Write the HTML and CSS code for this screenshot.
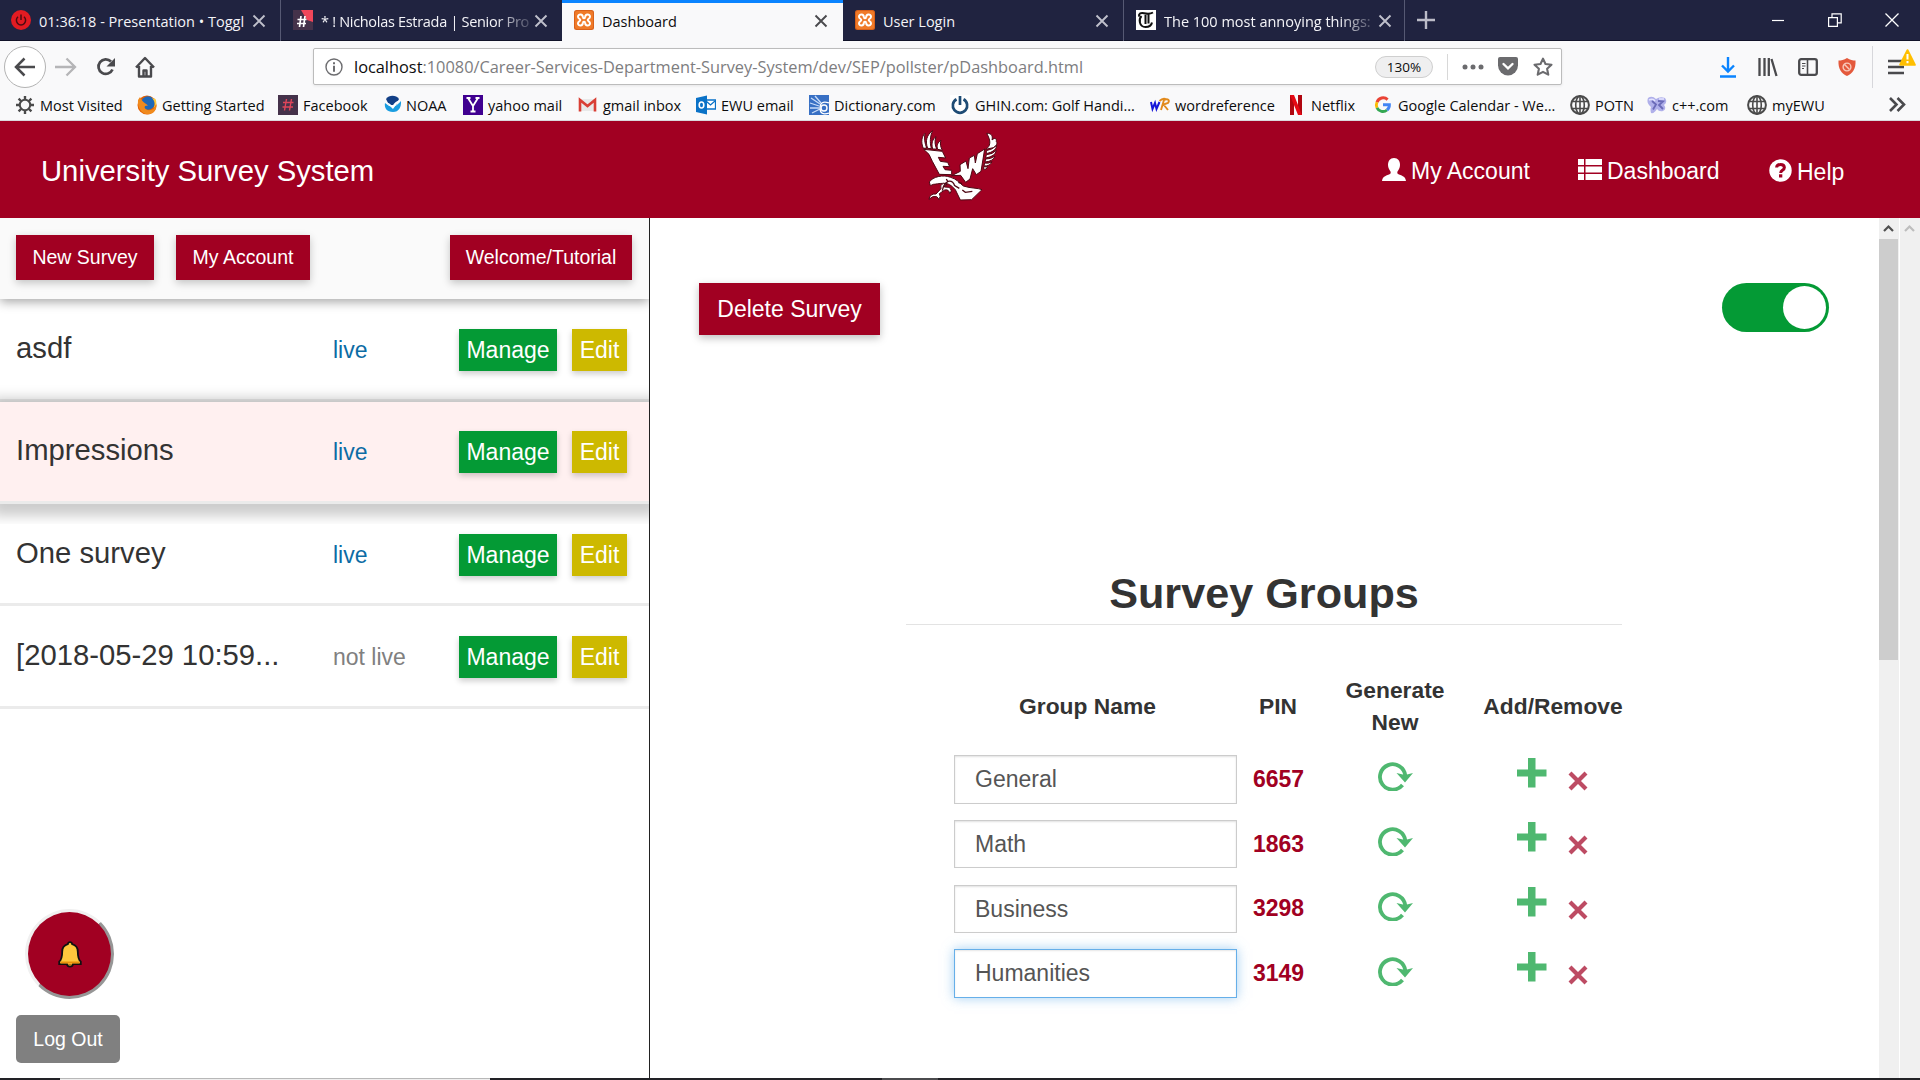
FILE: index.html
```html
<!DOCTYPE html>
<html lang="en">
<head>
<meta charset="utf-8">
<title>Dashboard</title>
<link rel="stylesheet" href="styles.css">
</head>
<body>
<svg class="defs" width="0" height="0">
  <symbol id="x" viewBox="0 0 14 14"><path d="M1.5 1.500 12.500 12.500M12.500 1.500 1.500 12.500" fill="none" stroke="currentColor" stroke-width="1.900"/></symbol>
  <symbol id="xampp" viewBox="0 0 20 20"><rect width="20" height="20" rx="2.500" fill="#d9611a"/><rect x="1" y="1" width="18" height="18" rx="2" fill="#f07a28"/><path d="M8.800 7.500C9.200 3.500 4 3.500 4 6.700 4 8.700 6.300 8.800 6.300 10S4 11.300 4 13.300C4 16.500 9.200 16.500 8.800 12.500M11.200 7.500C10.800 3.500 16 3.500 16 6.700 16 8.700 13.700 8.800 13.700 10S16 11.300 16 13.300C16 16.500 10.800 16.500 11.200 12.500M8.800 7.300Q10 9 11.200 7.300M8.800 12.700Q10 11 11.200 12.700" fill="none" stroke="#fff" stroke-width="2"/></symbol>
  <symbol id="globe" viewBox="0 0 20 20"><g fill="none" stroke="#4a4a4a" stroke-width="1.600"><circle cx="10" cy="10" r="8.900" stroke-width="2"/><ellipse cx="10" cy="10" rx="4.300" ry="8.900"/><path d="M10 1v18M2 6.500h16M2 13.500h16"/></g></symbol>
  <symbol id="refresh" viewBox="0 0 36 30"><path d="M25.500 24A12.700 12.700 0 1 1 28.300 14.500" fill="none" stroke="#4fb870" stroke-width="3.800"/><path d="M19.500 12 L28 14 36 12 28 21.500Z" fill="#4fb870"/></symbol>
  <symbol id="plus" viewBox="0 0 30 30"><path d="M0 11.500H11V0H18.500V11.500H29.500V18.500H18.500V29.500H11V18.500H0Z" fill="#4fb870"/></symbol>
  <symbol id="remove" viewBox="0 0 20 20"><path d="M2 2 18 18M18 2 2 18" stroke="#bd4b63" stroke-width="4.200" fill="none"/></symbol>
</svg>

<div class="tabs">
  <div class="tab">
    <svg class="fav" viewBox="0 0 20 20"><circle cx="10" cy="10" r="10" fill="#e21b22"/><path d="M7 6.800a4.600 4.600 0 1 0 6 0M10 4.500v5.500" stroke="#4d0b12" stroke-width="1.500" fill="none"/></svg>
    <span class="tab-title">01:36:18 - Presentation • Toggl</span><svg class="tab-x"><use href="#x"/></svg>
  </div>
  <div class="tab">
    <svg class="fav" viewBox="0 0 20 20"><rect width="20" height="20" fill="#45324a"/><path d="M8 0h12v12l-6-2z" fill="#f0475a"/><path d="M8 6 6.500 17M12 6 10.500 17M4.500 9.500h9M4 13.500h9" stroke="#fff" stroke-width="1.700"/></svg>
    <span class="tab-title fade tight">* ! Nicholas Estrada | Senior Pro</span><svg class="tab-x"><use href="#x"/></svg>
  </div>
  <div class="tab active">
    <svg class="fav"><use href="#xampp"/></svg>
    <span class="tab-title">Dashboard</span><svg class="tab-x"><use href="#x"/></svg>
  </div>
  <div class="tab">
    <svg class="fav"><use href="#xampp"/></svg>
    <span class="tab-title">User Login</span><svg class="tab-x"><use href="#x"/></svg>
  </div>
  <div class="tab last">
    <svg class="fav" viewBox="0 0 20 20"><rect width="20" height="20" fill="#fff"/><path d="M3 6.500C2.500 3.500 5 2.500 8 3.200S14 4.200 17 2.500M5.500 6C2.500 9 3 17 9.500 17 13 17 15.500 15 16 12.500M9.500 5v9M12.500 4.500v9" stroke="#111" stroke-width="2" fill="none"/></svg>
    <span class="tab-title fade">The 100 most annoying things:</span><svg class="tab-x"><use href="#x"/></svg>
  </div>
  <svg class="new-tab" viewBox="0 0 20 20"><path d="M1 10h18M10 1v18" stroke="#bcbcc8" stroke-width="2.400"/></svg>
  <div class="win">
    <svg width="14" height="14"><path d="M1 7.500h12" stroke="#fff" stroke-width="1.200"/></svg>
    <svg width="14" height="14" fill="none" stroke="#fff" stroke-width="1.200"><path d="M.6 4.600h8.800v8.800H.6zM4 4.500V.8h9.200v9H9.500"/></svg>
    <svg width="14" height="14" stroke="#fff" stroke-width="1.300"><path d="M.5.5l13 13M13.500.5l-13 13"/></svg>
  </div>
</div>

<div class="toolbar">
  <div class="nav-icons">
    <span class="back"><svg width="22" height="20" viewBox="0 0 22 20"><path d="M21 10H2M10.500 1.500 2 10l8.500 8.500" fill="none" stroke="#4a4a4d" stroke-width="2.500"/></svg></span>
    <svg class="fwd" width="22" height="20" viewBox="0 0 22 20"><path d="M0 10h19M11.500 1.500 20 10l-8.500 8.500" fill="none" stroke="#b5b5b7" stroke-width="2.300"/></svg>
    <svg class="reload" width="20" height="20" viewBox="0 0 20 20"><path d="M16.500 12.500A7.300 7.300 0 1 1 15 4.500" fill="none" stroke="#4a4a4d" stroke-width="2.700"/><path d="M19 1v8.500h-8.500z" fill="#4a4a4d"/></svg>
    <svg class="home" width="20" height="22" viewBox="0 0 20 22"><path d="M1 11.500 10 2l9 9.500M4 10v10.500h12V10M8.500 20.500v-6h3v6" fill="none" stroke="#4a4a4d" stroke-width="2.400" stroke-linejoin="round"/></svg>
  </div>
  <div class="url">
    <svg class="info" width="18" height="18" viewBox="0 0 18 18"><circle cx="9" cy="9" r="8" fill="none" stroke="#6d6d70" stroke-width="1.400"/><path d="M9 4.200v2.100M9 7.700v6" stroke="#6d6d70" stroke-width="2"/></svg>
    <span class="addr"><b>localhost</b>:10080/Career-Services-Department-Survey-System/dev/SEP/pollster/pDashboard.html</span>
    <span class="zoom">130%</span>
    <span class="vr"></span>
    <svg class="dots" width="22" height="6" viewBox="0 0 22 6" fill="#6b6b6e"><circle cx="3" cy="3" r="2.500"/><circle cx="11" cy="3" r="2.500"/><circle cx="19" cy="3" r="2.500"/></svg>
    <svg class="pocket" width="20" height="19" viewBox="0 0 20 19"><path d="M2 0h16q2 0 2 2v6.500a10 10 0 0 1-20 0V2Q0 0 2 0z" fill="#6b6b6e"/><path d="M5.500 7 10 11.300 14.500 7" stroke="#fff" stroke-width="2.400" fill="none" stroke-linecap="round"/></svg>
    <svg class="star" width="20" height="20" viewBox="0 0 20 20"><path d="M10 1.600 12.500 7l6 .7-4.400 4 1.200 6L10 14.800 4.700 17.700l1.200-6L1.500 7.700l6-.7z" fill="none" stroke="#6b6b6e" stroke-width="2.100" stroke-linejoin="round"/></svg>
  </div>
  <div class="right-icons">
    <svg width="16" height="22" viewBox="0 0 16 22"><path d="M8 1v14M2 9.500l6 6 6-6M0 20.500h16" fill="none" stroke="#0a84ff" stroke-width="2.400"/></svg>
    <svg width="20" height="20" viewBox="0 0 20 20"><path d="M1.500 1v18M6.500 1v18M10.800 1v18M13.500 2l5 17" stroke="#4a4a4d" stroke-width="2.300"/></svg>
    <svg width="20" height="18" viewBox="0 0 20 18"><rect x="1.200" y="1.200" width="17.600" height="15.600" rx="2" fill="none" stroke="#4a4a4d" stroke-width="2.300"/><path d="M9.500 1v16" stroke="#4a4a4d" stroke-width="1.600"/><path d="M4 5.500h3.500M4 8h3.500M4 10.500h2" stroke="#4a4a4d" stroke-width="1.200"/></svg>
    <svg width="18" height="18" viewBox="0 0 18 18"><path d="M9 0C12 2 15 2.500 17.500 2.500 18 11 14.500 15.500 9 18 3.500 15.500 0 11 .5 2.500 3 2.500 6 2 9 0z" fill="#e4593c"/><g fill="none" stroke="#f8c9bb" stroke-width="1.400"><circle cx="9" cy="9" r="3.900"/><path d="M6.500 6.500l5 5"/></g></svg>
    <span class="menu-sep"></span>
    <span class="menu"><svg width="17" height="16" viewBox="0 0 17 16"><path d="M0 2h16M0 8h16M0 14h16" stroke="#4a4a4d" stroke-width="2.300"/></svg>
    <svg class="warn" width="17" height="17" viewBox="0 0 17 17"><path d="M8.500 1.200 15.800 15.800H1.200z" fill="#ffbf00" stroke="#ffbf00" stroke-width="2" stroke-linejoin="round"/><path d="M8.500 5v5.500M8.500 12v2.200" stroke="#fff" stroke-width="2"/></svg></span>
  </div>
</div>

<div class="bookmarks">
  <span><svg viewBox="0 0 20 20"><circle cx="10" cy="10" r="5.200" fill="none" stroke="#4a4a4a" stroke-width="2"/><path d="M10 1v3.500M10 15.500V19M1 10h3.500M15.500 10H19M3.600 3.600 6 6M14 14l2.400 2.400M16.400 3.600 14 6M6 14l-2.400 2.400" stroke="#4a4a4a" stroke-width="2.400"/></svg>Most Visited</span>
  <span><svg viewBox="0 0 20 20"><circle cx="10" cy="10" r="9.500" fill="#e66000"/><circle cx="11" cy="8" r="6.800" fill="#1f68b8"/><path d="M1 5C0 14 6 20 12 19.300c5-.6 8-5 7.500-10C18 14 14 16 10.500 15 8 14.300 7 12.500 8 11l3-.5C9 8.500 7 8 5.500 6 4.500 4.500 3.500 3 3 2z" fill="#f08a1d"/><path d="M15 3c3 3 3.500 7 1.500 10 3-2 3.500-6 2-9z" fill="#ffcb3b"/></svg>Getting Started</span>
  <span><svg viewBox="0 0 20 20"><rect width="20" height="20" fill="#45324a"/><path d="M8.500 4 6.500 15.500M13.500 4 11.500 15.500M5 7.500h10.500M4.500 12h10.500" stroke="#e0455a" stroke-width="1.400"/></svg>Facebook</span>
  <span><svg class="noaa" viewBox="0 0 20 20"><path d="M3 4a8 8 0 0 1 13 0l-3 6H6z" fill="#123f86"/><path d="M2 8q8 8 16-2c.5 6-2 11-8 11S1 13 2 8z" fill="#1a9de0"/><path d="M2 6.500Q7 8 9.500 11 12 6 17.500 5 13 9 10 14 6 10 2 6.500z" fill="#fff"/></svg>NOAA</span>
  <span><svg viewBox="0 0 20 20"><rect width="20" height="20" fill="#400090"/><path d="M5 3l5 8 5-8M10 10.500V16M3.500 3h4M12.500 3h4M7.500 16.500h5" stroke="#fff" stroke-width="1.800" fill="none"/></svg>yahoo mail</span>
  <span><svg viewBox="0 0 20 20"><path d="M1.500 4h16v12h-16z" fill="#e9e9e9"/><path d="M2 16.500V5l7.500 6L17 5v11.500" fill="none" stroke="#d93f35" stroke-width="2.600"/></svg>gmail inbox</span>
  <span><svg viewBox="0 0 20 20"><path d="M9 5h10.500v9H9z" fill="#fff" stroke="#0a72c7" stroke-width="1.300"/><path d="M10 6l4.500 4L19 6" fill="none" stroke="#0a72c7" stroke-width="1.300"/><path d="M0 3 11 .5v19L0 17z" fill="#0a72c7"/><ellipse cx="5.500" cy="10" rx="2.300" ry="3" fill="none" stroke="#fff" stroke-width="1.600"/></svg>EWU email</span>
  <span><svg viewBox="0 0 20 20"><rect width="20" height="20" fill="#3870c4"/><path d="M2 3l9 6M6 1l6 7M1 8l9 3M1 13h9M3 18l8-4" stroke="#c8dcf8" stroke-width="1.300"/><circle cx="15" cy="13" r="3" fill="none" stroke="#fff" stroke-width="1.400"/><path d="M20 8q-9-3-9 5t9 5" fill="none" stroke="#fff" stroke-width="1.300"/></svg>Dictionary.com</span>
  <span><svg viewBox="0 0 20 20"><rect width="20" height="20" fill="#fff"/><path d="M6.500 4.300a7.200 7.200 0 1 0 7 0M10 1v9" fill="none" stroke="#1f4c75" stroke-width="2.700"/></svg>GHIN.com: Golf Handi...</span>
  <span><svg viewBox="0 0 20 20"><path d="M1 7l1.500 7L5 8l1.500 6L9.500 7" fill="none" stroke="#1616d8" stroke-width="2"/><path d="M11 15l3-10c4-2 6 .5 4 3l-4.500 1.500L18 15M9.500 6q3-3 6-2" fill="none" stroke="#e28a1c" stroke-width="1.900"/></svg>wordreference</span>
  <span><svg viewBox="0 0 20 20"><path d="M4 0h4v20H4zM12 0h4v20h-4z" fill="#b0060f"/><path d="M4 0h4l8 20h-4z" fill="#e50914"/></svg>Netflix</span>
  <span><svg viewBox="0 0 20 20"><g fill="none" stroke-width="2.900"><path d="M14.600 4.600A6.500 6.500 0 0 0 4 7.200" stroke="#ea4335"/><path d="M4 7.200a6.500 6.500 0 0 0 0 5.600" stroke="#fbbc05"/><path d="M4 12.800a6.500 6.500 0 0 0 10 2.200" stroke="#34a853"/><path d="M14 15a6.500 6.500 0 0 0 2.400-5.300H10" stroke="#4285f4"/></g></svg>Google Calendar - We...</span>
  <span><svg><use href="#globe"/></svg>POTN</span>
  <span><svg viewBox="0 0 20 20"><path d="M1 3q4-3 8 1 4-3 9-1 3 4-1 7 3 4-1 6-4 1-6-2-3 5-6 4-1-4 0-6-5-4-3-9z" fill="#b0b0ea"/><path d="M5 6l4 3.500-3 5M11 6l5 .5-4 3.500 4 4" fill="none" stroke="#6a6ab8" stroke-width="1.800"/><path d="M2 5q4-2 6 1M12 4l5 0" stroke="#e4e4ff" stroke-width="1.500" fill="none"/></svg>c++.com</span>
  <span><svg><use href="#globe"/></svg>myEWU</span>
  <span><svg viewBox="0 0 20 20"><path d="M2 3l6.500 6.500L2 16M9.500 3l6.500 6.500L9.500 16" fill="none" stroke="#4a4a4d" stroke-width="2.600"/></svg></span>
</div>

<header class="header">
  <h1>University Survey System</h1>
  <svg class="eagle" width="160" height="97" viewBox="0 0 480 291">
    <g fill="#fff" stroke="#4d0814" stroke-width="3" stroke-linejoin="round">
      <path d="M130 82C122 64 125 46 135 37 132 52 134 66 140 81Z"/><path d="M143 82C135 60 140 42 158 29 150 46 149 63 154 83Z"/><path d="M158 84C153 66 158 54 168 47 163 61 165 72 170 84Z"/><path d="M173 85C169 74 173 64 183 58 179 69 182 78 187 88Z"/>
      <path d="M131 85 187 91 197 111 175 109 181 121 203 124 209 137 189 136 195 146 215 148 215 161 178 160 157 121 147 100Z"/>
      <path d="M317 85C332 76 334 60 320 37 338 36 338 50 336 57 346 48 350 53 349 62 354 66 348 76 340 80Z"/><path d="M319 89Q338 86 350 73 350 91 319 98Z"/><path d="M319 101Q338 100 349 88 347 106 317 111Z"/><path d="M317 114Q332 115 345 105 340 121 315 123Z"/><path d="M314 126Q325 129 336 122 330 136 312 135Z"/><path d="M311 137 323 138Q319 147 311 145Z"/>
      <path d="M240 131 258 120 264 143 268 111 283 103 286 126 292 98 314 84 303 151 289 161 278 143 270 174 257 184 242 163 215 164 241 151Z"/>
      <path d="M148 183C158 167 190 160 212 169 228 173 238 185 250 195 274 203 292 200 306 206L275 236 241 237 226 206C214 193 205 186 190 187 177 187 166 190 160 190L151 194Z"/>
      <path d="M190 187Q178 192 183 203L168 219Q150 217 147 235 158 223 170 227 176 231 176 236 184 226 178 218L194 207Q207 204 209 218 219 208 207 199L193 198Q191 193 201 191Z"/>
    </g>
    <path d="M187 209Q190 190 204 181 218 177 224 194L238 202M247 207 256 214 277 211M203 181 199 174M235 184 246 188" stroke="#4d0814" stroke-width="4" fill="none"/>
  </svg>
  <nav>
    <a class="n1"><svg width="24" height="23" viewBox="0 0 24 23"><path d="M12 0c4 0 6 3 6 7 0 3-1.500 5-2.500 6.500-.6 1.500 0 2.500 1.500 3 4 1.500 6.500 2.500 7 6.500H0c.5-4 3-5 7-6.500 1.500-.5 2.100-1.500 1.500-3C7.500 12 6 10 6 7c0-4 2-7 6-7z" fill="#fff"/></svg>My Account</a>
    <a class="n2"><svg width="24" height="21" viewBox="0 0 24 21"><path d="M0 0h6v6H0zM7.500 0H24v6H7.500zM0 7.500h6v6H0zM7.500 7.500H24v6H7.500zM0 15h6v6H0zM7.500 15H24v6H7.500z" fill="#fff"/></svg>Dashboard</a>
    <a class="n3"><svg width="23" height="23" viewBox="0 0 23 23"><circle cx="11.500" cy="11.500" r="11.200" fill="#fff"/><path d="M7.600 8.500Q7.800 5.600 11.500 5.600T15.400 8.600Q15.400 10.300 13.300 11.400 11.700 12.300 11.700 14" fill="none" stroke="#a10022" stroke-width="3"/><path d="M10 15.300h3.300v3.200H10z" fill="#a10022"/></svg>Help</a>
  </nav>
</header>

<div class="page">
  <aside>
    <div class="actions"><button>New Survey</button><button>My Account</button><button class="end">Welcome/Tutorial</button></div>
    <div class="survey"><span class="name">asdf</span><span class="status">live</span><button class="manage">Manage</button><button class="edit">Edit</button></div>
    <div class="survey selected"><span class="name">Impressions</span><span class="status">live</span><button class="manage">Manage</button><button class="edit">Edit</button></div>
    <div class="survey"><span class="name">One survey</span><span class="status">live</span><button class="manage">Manage</button><button class="edit">Edit</button></div>
    <div class="survey"><span class="name">[2018-05-29 10:59...</span><span class="status off">not live</span><button class="manage">Manage</button><button class="edit">Edit</button></div>
    <div class="foot">
      <button class="bell"><svg width="24" height="27" viewBox="0 0 24 27"><path d="M12 1.200c1.200 0 2 .8 2.200 2 3.800 1 5.600 4 5.600 7.500 0 6 .8 8 3 10v2.500H15c-.3 1.800-1.500 2.500-3 2.500s-2.700-.7-3-2.500H1.200v-2.500c2.200-2 3-4 3-10 0-3.500 1.800-6.500 5.600-7.500.2-1.200 1-2 2.200-2z" fill="#ffc83d" stroke="#111" stroke-width="1.800"/><path d="M2.500 21.500h19" stroke="#e8920c" stroke-width="2"/><path d="M9.800 23.300h4.400q-2 2.700-4.400 0z" fill="#a05c10"/></svg></button>
      <button class="logout">Log Out</button>
    </div>
  </aside>
  <main>
    <div class="top"><button class="delete">Delete Survey</button><span class="toggle"></span></div>
    <h2>Survey Groups</h2>
    <div class="grid heads"><b class="first">Group Name</b><b>PIN</b><b>Generate<br>New</b><b>Add/Remove</b></div>
    <div class="grid"><span class="field">General</span><b class="pin">6657</b><svg class="refresh"><use href="#refresh"/></svg><span class="ops"><svg class="plus"><use href="#plus"/></svg><svg class="remove"><use href="#remove"/></svg></span></div>
    <div class="grid"><span class="field">Math</span><b class="pin">1863</b><svg class="refresh"><use href="#refresh"/></svg><span class="ops"><svg class="plus"><use href="#plus"/></svg><svg class="remove"><use href="#remove"/></svg></span></div>
    <div class="grid"><span class="field">Business</span><b class="pin">3298</b><svg class="refresh"><use href="#refresh"/></svg><span class="ops"><svg class="plus"><use href="#plus"/></svg><svg class="remove"><use href="#remove"/></svg></span></div>
    <div class="grid"><span class="field focus">Humanities</span><b class="pin">3149</b><svg class="refresh"><use href="#refresh"/></svg><span class="ops"><svg class="plus"><use href="#plus"/></svg><svg class="remove"><use href="#remove"/></svg></span></div>
  </main>
  <div class="scroll"><svg width="20" height="21"><path d="M5 13l4.500-4.500L14 13" fill="none" stroke="#505050" stroke-width="2.200"/></svg><div class="thumb"></div></div>
  <div class="scroll outer"><svg width="20" height="21"><path d="M5 13l4.500-4.500L14 13" fill="none" stroke="#bdbdbd" stroke-width="2.200"/></svg></div>
</div>
<div class="strip"><i class="light"></i><i class="mid"></i></div>
</body>
</html>
```
FILE: styles.css
```css
* { box-sizing: border-box; }
body {
  margin: 0;
  width: 1920px;
  height: 1080px;
  overflow: hidden;
  display: flex;
  flex-direction: column;
  background: #fff;
  font: 23px "Liberation Sans", Arial, sans-serif;
  color: #333;
}
svg { display: block; flex: none; }
.defs { position: absolute; }
button {
  border: 0;
  padding: 0;
  font: inherit;
  color: #fff;
  background: #a10022;
}

/* Browser chrome */
.tabs, .toolbar, .bookmarks {
  flex: none;
  display: flex;
  align-items: center;
  font-family: "Open Sans", "Noto Sans", sans-serif;
  font-size: 14.5px;
  color: #0c0c0d;
}
.tabs { height: 41px; background: #202340; border-bottom: 1px solid #101228; color: #f4f4f8; }
.tab {
  width: 281px;
  height: 41px;
  padding: 0 14px 0 11px;
  display: flex;
  align-items: center;
  border-right: 1px solid #565973;
}
.tab:nth-child(2) { border-right: 0; padding-left: 12px; }
.tab.active { background: #f9f9fa; border: 0; border-top: 3px solid #0a84ff; color: #0c0c0d; padding: 0 15px 3px 12px; }
.tab.active + .tab { padding-left: 12px; }
.tab.last { padding: 0 12px 0 12px; }
.fav { width: 20px; height: 20px; }
.tab-title { width: 212px; margin: 2px 0 0 8px; white-space: nowrap; }
.fade {
  width: 208px;
  margin-right: 4px;
  -webkit-mask-image: linear-gradient(90deg, #000 175px, transparent 216px);
  mask-image: linear-gradient(90deg, #000 175px, transparent 216px);
}
.tight { letter-spacing: -.3px; }
.tab-x { width: 14px; height: 14px; margin: 2px 0 0 auto; color: #bfc0cb; }
.active .tab-x { color: #4a4a4d; }
.new-tab { width: 20px; height: 20px; margin-left: 11px; }
.win { display: flex; gap: 43px; margin: 0 21px 0 auto; }

.toolbar { height: 51px; background: #f9f9fa; }
.nav-icons { width: 313px; display: flex; align-items: center; padding-left: 4px; }
.back {
  width: 42px;
  height: 42px;
  display: grid;
  place-items: center;
  border: 1px solid #b3b3b3;
  border-radius: 50%;
  background: #fff;
}
.fwd { margin-left: 9px; }
.reload { margin-left: 19px; }
.home { margin-left: 19px; }
.url {
  width: 1249px;
  height: 37px;
  display: flex;
  align-items: center;
  padding: 0 8px 0 11px;
  background: #fff;
  border: 1px solid #bcbcbc;
  border-radius: 2px;
  box-shadow: 0 1px 3px rgba(0, 0, 0, .08);
}
.addr { margin-left: 11px; color: #7d7d80; font-size: 16.35px; white-space: nowrap; }
.addr b { font-weight: 400; color: #0c0c0d; }
.zoom {
  width: 58px;
  height: 22px;
  margin-left: auto;
  border: 1px solid #cfcfcf;
  border-radius: 11px;
  background: #efeff0;
  font-size: 13.5px;
  line-height: 20px;
  text-align: center;
}
.vr { width: 1px; height: 26px; margin-left: 14px; background: #d8d8d8; }
.dots { margin-left: 14px; }
.pocket { margin-left: 14px; }
.star { margin-left: 15px; }
.right-icons { display: flex; align-items: center; margin-left: 158px; }
.right-icons > svg + svg { margin-left: 20px; }
.right-icons > svg:nth-child(2) { margin-left: 22px; }
.menu-sep { width: 1px; height: 42px; margin-left: 16px; background: #d7d7db; }
.menu { position: relative; margin-left: 15px; }
.warn { position: absolute; left: 11px; top: -10px; }

.bookmarks {
  height: 29px;
  display: grid;
  grid-template-columns: 122px 141px 105px 80px 115px 118px 113px 141px 200px 136px 87px 197px 77px 100px 141px 30px;
  padding: 0 0 2px 15px;
  background: #f9f9fa;
  border-bottom: 1px solid #d9d9dc;
  white-space: nowrap;
}
.bookmarks span { display: flex; align-items: center; gap: 5px; }
.bookmarks svg { width: 20px; height: 20px; }
.bookmarks .noaa { margin-right: -2px; }

/* Site header */
.header {
  flex: none;
  height: 97px;
  display: grid;
  grid-template-columns: 880px 160px 1fr;
  background: #a10022;
  color: #fff;
}
h1 { margin: 0; padding: 2px 0 0 41px; font-size: 29.250px; font-weight: 400; line-height: 97px; }
nav { display: flex; align-items: center; padding-left: 342px; }
nav a { display: flex; align-items: center; gap: 5px; margin-top: 2px; white-space: nowrap; }
nav svg { margin-bottom: 4px; }
.n1 { width: 196px; }
.n2 { width: 191px; }
.n3 { margin-top: 4px; }

.page { height: 860px; display: flex; flex: none; }
aside {
  width: 650px;
  display: flex;
  flex-direction: column;
  border-right: 1px solid #222;
}
.actions {
  position: relative;
  z-index: 1;
  flex: none;
  height: 81.300px;
  display: flex;
  padding: 17px 17px 0 16px;
  background: #fafafa;
  box-shadow: 0 3px 10px rgba(0, 0, 0, .35);
  clip-path: inset(0 0 -20px 0);
}
.actions button {
  height: 45px;
  width: 138px;
  margin-right: 22px;
  font-size: 19.500px;
  box-shadow: 0 3px 8px rgba(0, 0, 0, .22);
}
.actions button:nth-child(2) { width: 134px; }
.actions .end { width: 182px; margin: 0 0 0 auto; }
.survey {
  flex: none;
  height: 102.400px;
  display: grid;
  grid-template-columns: 316px 127px 98px 55px;
  column-gap: 0;
  padding: 29.600px 0 0 16px;
  align-items: start;
  border-bottom: 3px solid #ebebeb;
  line-height: 42px;
}
.survey.selected {
  background: #fff0f0;
  box-shadow: 0 4px 12px 8px rgba(0, 0, 0, .2);
  clip-path: inset(-20px 0);
}
.name { font-size: 29.250px; margin-top: -2px; white-space: nowrap; }
.status { color: #0d6ca5; padding-left: 1px; }
.off { color: #808080; }
.survey button { height: 42px; box-shadow: 0 3px 6px rgba(0, 0, 0, .2); }
.survey .manage { background: #049a35; }
.survey .edit { background: #cdb900; margin-left: 15px; width: 55px; }
.foot { margin-top: auto; padding: 0 0 15px 16px; display: flex; flex-direction: column; align-items: flex-start; }
.bell {
  width: 89px;
  height: 90px;
  margin: 0 0 16px 9px;
  display: grid;
  place-items: center;
  border: 3px solid;
  border-color: #f0f0f0 #969696 #969696 #f0f0f0;
  border-radius: 50%;
}
.logout { width: 104px; height: 48px; border-radius: 5px; background: #808080; font-size: 19.500px; }

main { width: 1229px; padding: 65px 50px 0 49px; }
.top { display: flex; justify-content: space-between; align-items: flex-start; }
.delete { width: 181px; height: 52px; box-shadow: 0 3px 8px rgba(0, 0, 0, .25); }
.toggle {
  width: 107px;
  height: 49px;
  padding: 3px;
  display: flex;
  justify-content: flex-end;
  border-radius: 25px;
  background: #049a35;
}
.toggle::before { content: ""; width: 43px; height: 43px; border-radius: 50%; background: #fff; }
h2 {
  width: 716px;
  height: 62px;
  margin: 228px 0 0 207px;
  border-bottom: 1px solid #e3e3e3;
  font-size: 43.200px;
  line-height: 60px;
  text-align: center;
}
.grid {
  display: grid;
  grid-template-columns: 283px 82px 152px 164px;
  align-items: center;
  justify-items: center;
  height: 48.500px;
  margin: 0 0 16.300px 255px;
}
.heads { height: 64px; line-height: 32px; text-align: center; margin-top: 49px; margin-bottom: 17px; font-size: 22.800px; }
.first { margin-right: 16px; }
.field {
  justify-self: stretch;
  height: 48.500px;
  padding-left: 20px;
  border: 1px solid #ccc;
  box-shadow: inset 0 1px 2px rgba(0, 0, 0, .12);
  color: #555;
  line-height: 47px;
}
.focus { border-color: #66afe9; box-shadow: inset 0 1px 2px rgba(0, 0, 0, .1), 0 0 11px rgba(102, 175, 233, .6); }
.pin { color: #a10022; padding-left: 1px; }
.refresh { width: 36px; height: 30px; margin-bottom: 6px; }
.ops { display: flex; align-self: start; width: 73px; gap: 21px; padding-top: 2.600px; }
.plus { width: 30px; height: 30px; }
.remove { width: 20px; height: 20px; margin-top: 13px; }

.scroll { width: 20px; background: #f0f0f0; }
.outer { width: 20px; margin-left: 1px; }
.thumb { width: 19px; height: 421px; background: #cdcdcd; }
.strip { height: 2px; display: flex; background: #222226; }
.strip i { height: 2px; }
.light { width: 430px; margin-left: 60px; background: linear-gradient(#b8b8b8 50%, #eee 50%); }
.mid { width: 56px; margin-left: 392px; background: #4b4b4e; }
```
